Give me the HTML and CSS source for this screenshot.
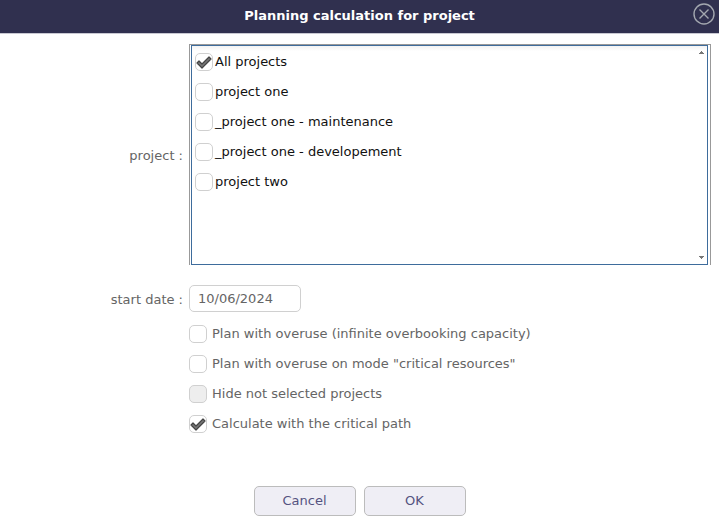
FILE: index.html
```html
<!DOCTYPE html>
<html lang="en">
<head>
<meta charset="utf-8">
<title>Planning calculation for project</title>
<link rel="stylesheet" href="styles.css">
</head>
<body>
<svg class="defs" aria-hidden="true">
  <symbol id="tick" viewBox="0 0 18 18">
    <path d="M2 10 4 8 7 11 14 4 16 6 7 15Z" fill="#777" stroke="#444" stroke-width="1.2" stroke-linejoin="round"/>
  </symbol>
</svg>
<form class="dialog">
  <header class="title-bar">
    <h1>Planning calculation for project</h1>
    <button type="button" class="close" aria-label="Close">
      <svg viewBox="0 0 22 22" fill="none" stroke="#a3a7af"><circle cx="11" cy="11" r="10" stroke-width="1.4"/><path d="M6.500 6.500 15.500 15.500M15.500 6.500 6.500 15.500" stroke-width="1.4"/></svg>
    </button>
  </header>
  <main class="fields">
    <span class="label" id="project-label">project&nbsp;:</span>
    <div class="frame">
      <div class="list" role="group" aria-labelledby="project-label">
        <div class="items">
          <label class="item"><span class="box"><input type="checkbox" checked><svg><use href="#tick"/></svg></span>All projects</label>
          <label class="item"><span class="box"><input type="checkbox"></span>project one</label>
          <label class="item"><span class="box"><input type="checkbox"></span>_project one - maintenance</label>
          <label class="item"><span class="box"><input type="checkbox"></span>_project one - developement</label>
          <label class="item"><span class="box"><input type="checkbox"></span>project two</label>
        </div>
        <div class="scroll" aria-hidden="true">
          <svg viewBox="0 0 5 3"><path d="M0 3V2H1V1H2V0H3V1H4V2H5V3Z"/></svg>
          <svg viewBox="0 0 5 3"><path d="M0 0V1H1V2H2V3H3V2H4V1H5V0Z"/></svg>
        </div>
      </div>
    </div>
    <label class="label" for="start">start date&nbsp;:</label>
    <input class="date" id="start" type="text" value="10/06/2024">
    <div class="options">
      <label class="option"><span class="box"><input type="checkbox"></span>Plan with overuse (infinite overbooking capacity)</label>
      <label class="option"><span class="box"><input type="checkbox"></span>Plan with overuse on mode "critical resources"</label>
      <label class="option"><span class="box"><input type="checkbox" disabled></span>Hide not selected projects</label>
      <label class="option"><span class="box"><input type="checkbox" checked><svg><use href="#tick"/></svg></span>Calculate with the critical path</label>
    </div>
  </main>
  <footer class="actions">
    <button type="button">Cancel</button>
    <button type="submit">OK</button>
  </footer>
</form>
</body>
</html>
```
FILE: styles.css
```css
* {
  box-sizing: border-box;
}

body {
  margin: 0;
  background: #fff;
  color: #656565;
  font: 13px/18px Verdana, "DejaVu Sans", sans-serif;
}

.defs {
  position: absolute;
  width: 0;
  height: 0;
}

.title-bar {
  display: grid;
  grid-template-columns: 24px 1fr 24px;
  align-items: center;
  height: 34px;
  padding: 0 2px 2px 2px;
  background: #30304f;
  border-bottom: 1px solid #c8c8d2;
}

.title-bar h1 {
  grid-column: 2;
  margin: 0;
  color: #fff;
  font-size: 13px;
  line-height: 18px;
  text-align: center;
}

.close {
  align-self: start;
  width: 22px;
  height: 22px;
  margin-top: 3px;
  padding: 0;
  border: 0;
  background: none;
}

.close svg {
  display: block;
}

.fields {
  display: grid;
  grid-template-columns: 183px 1fr;
  column-gap: 6px;
  row-gap: 20px;
  align-items: center;
  padding: 10px 8px 0 0;
}

.label {
  padding-top: 3px;
  text-align: right;
}

.frame {
  border: 1px solid #999;
  border-bottom: 0;
  padding: 0 2px 0 1px;
}

.list {
  display: flex;
  justify-content: space-between;
  height: 220px;
  border: 1px solid #3e6c9c;
  background: linear-gradient(#f3f3f3, #fff 5px);
  color: #111;
}

.items {
  padding: 1px 3px;
}

.item,
.option {
  display: flex;
  align-items: center;
  height: 30px;
}

.item {
  gap: 2px;
}

.option {
  gap: 5px;
}

.box {
  position: relative;
  flex: none;
  width: 18px;
  height: 18px;
}

.box input {
  display: block;
  appearance: none;
  width: 18px;
  height: 18px;
  margin: 0;
  border: 1px solid #d0d0d0;
  border-radius: 5px;
  background: #fff;
}

.box input:disabled {
  background: #eee;
}

.box svg {
  position: absolute;
  inset: 0;
  width: 18px;
  height: 18px;
  pointer-events: none;
}

.scroll {
  display: flex;
  flex-direction: column;
  justify-content: space-between;
  padding: 5px 3px 5px 0;
}

.scroll svg {
  width: 5px;
  height: 3px;
  fill: #777;
}

.date {
  width: 112px;
  height: 27px;
  padding: 0 8px;
  border: 1px solid #d0d0d0;
  border-radius: 5px;
  background: #fff;
  color: #656565;
  font: inherit;
}

.options {
  grid-column: 2;
  margin-top: -13px;
}

.actions {
  display: flex;
  justify-content: center;
  gap: 8px;
  margin-top: 47px;
}

.actions button {
  width: 102px;
  height: 30px;
  border: 1px solid #bcbcbc;
  border-radius: 5px;
  background: #efeef5;
  color: #545381;
  font: inherit;
}
```
